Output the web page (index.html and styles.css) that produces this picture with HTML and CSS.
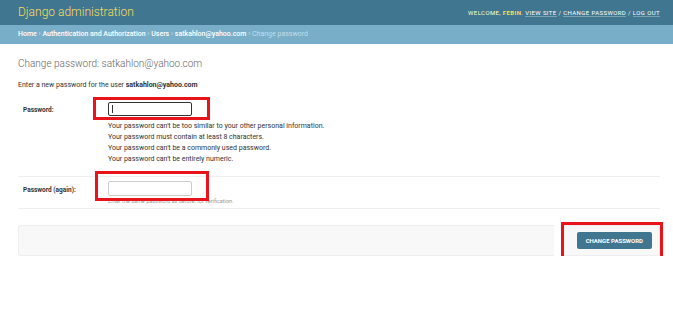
FILE: index.html
```html
<!DOCTYPE html>
<html lang="en">
<head>
<meta charset="UTF-8">
<title>Change password | Django site admin</title>
<link rel="stylesheet" href="styles.css">
</head>
<body>

<div id="header">
  <div id="branding">Django administration</div>
  <div id="user-tools">
    Welcome, <strong>febin</strong>.
    <a href="#">View site</a> /
    <a href="#">Change password</a> /
    <a href="#">Log out</a>
  </div>
</div>

<div class="breadcrumbs">
  <a href="#">Home</a> &rsaquo;
  <a href="#">Authentication and Authorization</a> &rsaquo;
  <a href="#">Users</a> &rsaquo;
  <a href="#">satkahlon@yahoo.com</a> &rsaquo;
  <span class="current">Change password</span>
</div>

<div id="content">
  <h1>Change password: satkahlon@yahoo.com</h1>

  <form>
    <p class="intro">Enter a new password for the user <strong>satkahlon@yahoo.com</strong></p>

    <div class="form-row first">
      <label for="id_password1">Password:</label>
      <div class="field">
        <div class="mark mark-one">
          <input type="password" id="id_password1" class="focused">
        </div>
        <ul class="help">
          <li>Your password can't be too similar to your other personal information.</li>
          <li>Your password must contain at least 8 characters.</li>
          <li>Your password can't be a commonly used password.</li>
          <li>Your password can't be entirely numeric.</li>
        </ul>
      </div>
    </div>

    <div class="form-row second">
      <label for="id_password2">Password (again):</label>
      <div class="field">
        <div class="mark mark-two">
          <input type="password" id="id_password2">
        </div>
        <div class="help small">Enter the same password as before, for verification.</div>
      </div>
    </div>

    <div class="submit-row">
      <div class="mark mark-three">
        <button type="button">Change password</button>
      </div>
    </div>
  </form>
</div>

</body>
</html>
```

FILE: styles.css
```css
/* Admin base */

body {
  margin: 0;
  font-family: Roboto, "Liberation Sans", Arial, sans-serif;
  color: #333;
  background: #fff;
}

a {
  color: #fff;
  text-decoration: none;
}

#header {
  display: flex;
  align-items: center;
  justify-content: space-between;
  height: 25px;
  padding: 0 13px 0 18px;
  background: #417690;
}

#branding {
  font-size: 12px;
  font-weight: 300;
  color: #f5dd5d;
  margin-top: -2px;
}

#user-tools {
  font-size: 6px;
  letter-spacing: 0.4px;
  text-transform: uppercase;
  color: #ffc;
}

#user-tools strong {
  color: #f5dd5d;
}

#user-tools a {
  border-bottom: 1px solid rgba(255, 255, 255, 0.3);
}

.breadcrumbs {
  height: 19px;
  line-height: 19px;
  padding: 0 18px;
  background: #79aec8;
  color: #c4dce8;
  font-size: 7px;
  font-weight: 500;
}

.breadcrumbs .current {
  font-weight: 400;
}

#content {
  padding: 0 13px 0 18px;
}

h1 {
  margin: 14px 0 0;
  font-size: 10px;
  font-weight: 300;
  color: #666;
}

.intro {
  margin: 12px 0 7px;
  font-size: 7px;
}

.intro strong {
  font-weight: 700;
}

.form-row {
  display: flex;
  padding: 6px 5px 11px;
  border-bottom: 1px solid #eee;
}

.form-row.second {
  padding-top: 4px;
  padding-bottom: 4px;
}

.form-row label {
  width: 85px;
  font-size: 6.5px;
  font-weight: 700;
  color: #333;
  padding-top: 4px;
}

.form-row.second label {
  padding-top: 5px;
}

.field input {
  display: block;
  box-sizing: border-box;
  width: 84px;
  height: 15px;
  margin: 0;
  border: 1px solid #ccc;
  border-radius: 2px;
  background: #fff;
}

/* focused field, with the text caret */
.field input.focused {
  height: 14px;
  border-color: #333;
  border-width: 1.3px;
  background: #fff linear-gradient(#333, #333) no-repeat 3px 2px / 1px 8px;
}

.help {
  margin: 0;
  padding: 0;
  list-style: none;
  font-size: 7px;
  color: #333;
}

.help li {
  height: 11px;
  line-height: 11px;
}

ul.help {
  margin-top: 5px;
}

.help.small {
  margin-top: 2px;
  font-size: 5.5px;
  line-height: 6px;
  color: #999;
}

.submit-row {
  display: flex;
  justify-content: flex-end;
  align-items: center;
  height: 29px;
  margin-top: 16px;
  padding: 0 7px;
  background: #f8f8f8;
  border: 1px solid #eee;
  border-radius: 2px;
}

.submit-row button {
  display: block;
  height: 17px;
  padding: 0 9px;
  border: none;
  border-radius: 2px;
  background: #417690;
  color: #fff;
  font-family: Roboto, "Liberation Sans", sans-serif;
  font-size: 6px;
  font-weight: 700;
  text-transform: uppercase;
}

/* red highlight boxes drawn on top of the screenshot */

.mark {
  position: relative;
  width: fit-content;
}

.mark::after {
  content: "";
  position: absolute;
  border: 3px solid #e8131b;
  pointer-events: none;
}

.mark-one::after {
  left: -15px;
  right: -18px;
  top: -5px;
  bottom: -4px;
}

.mark-two::after {
  left: -13px;
  right: -17px;
  top: -10px;
  bottom: -5px;
}

.mark-three::after {
  left: -16px;
  right: -11px;
  top: -10px;
  bottom: -10px;
  outline: 7px solid #fff;
}
```
